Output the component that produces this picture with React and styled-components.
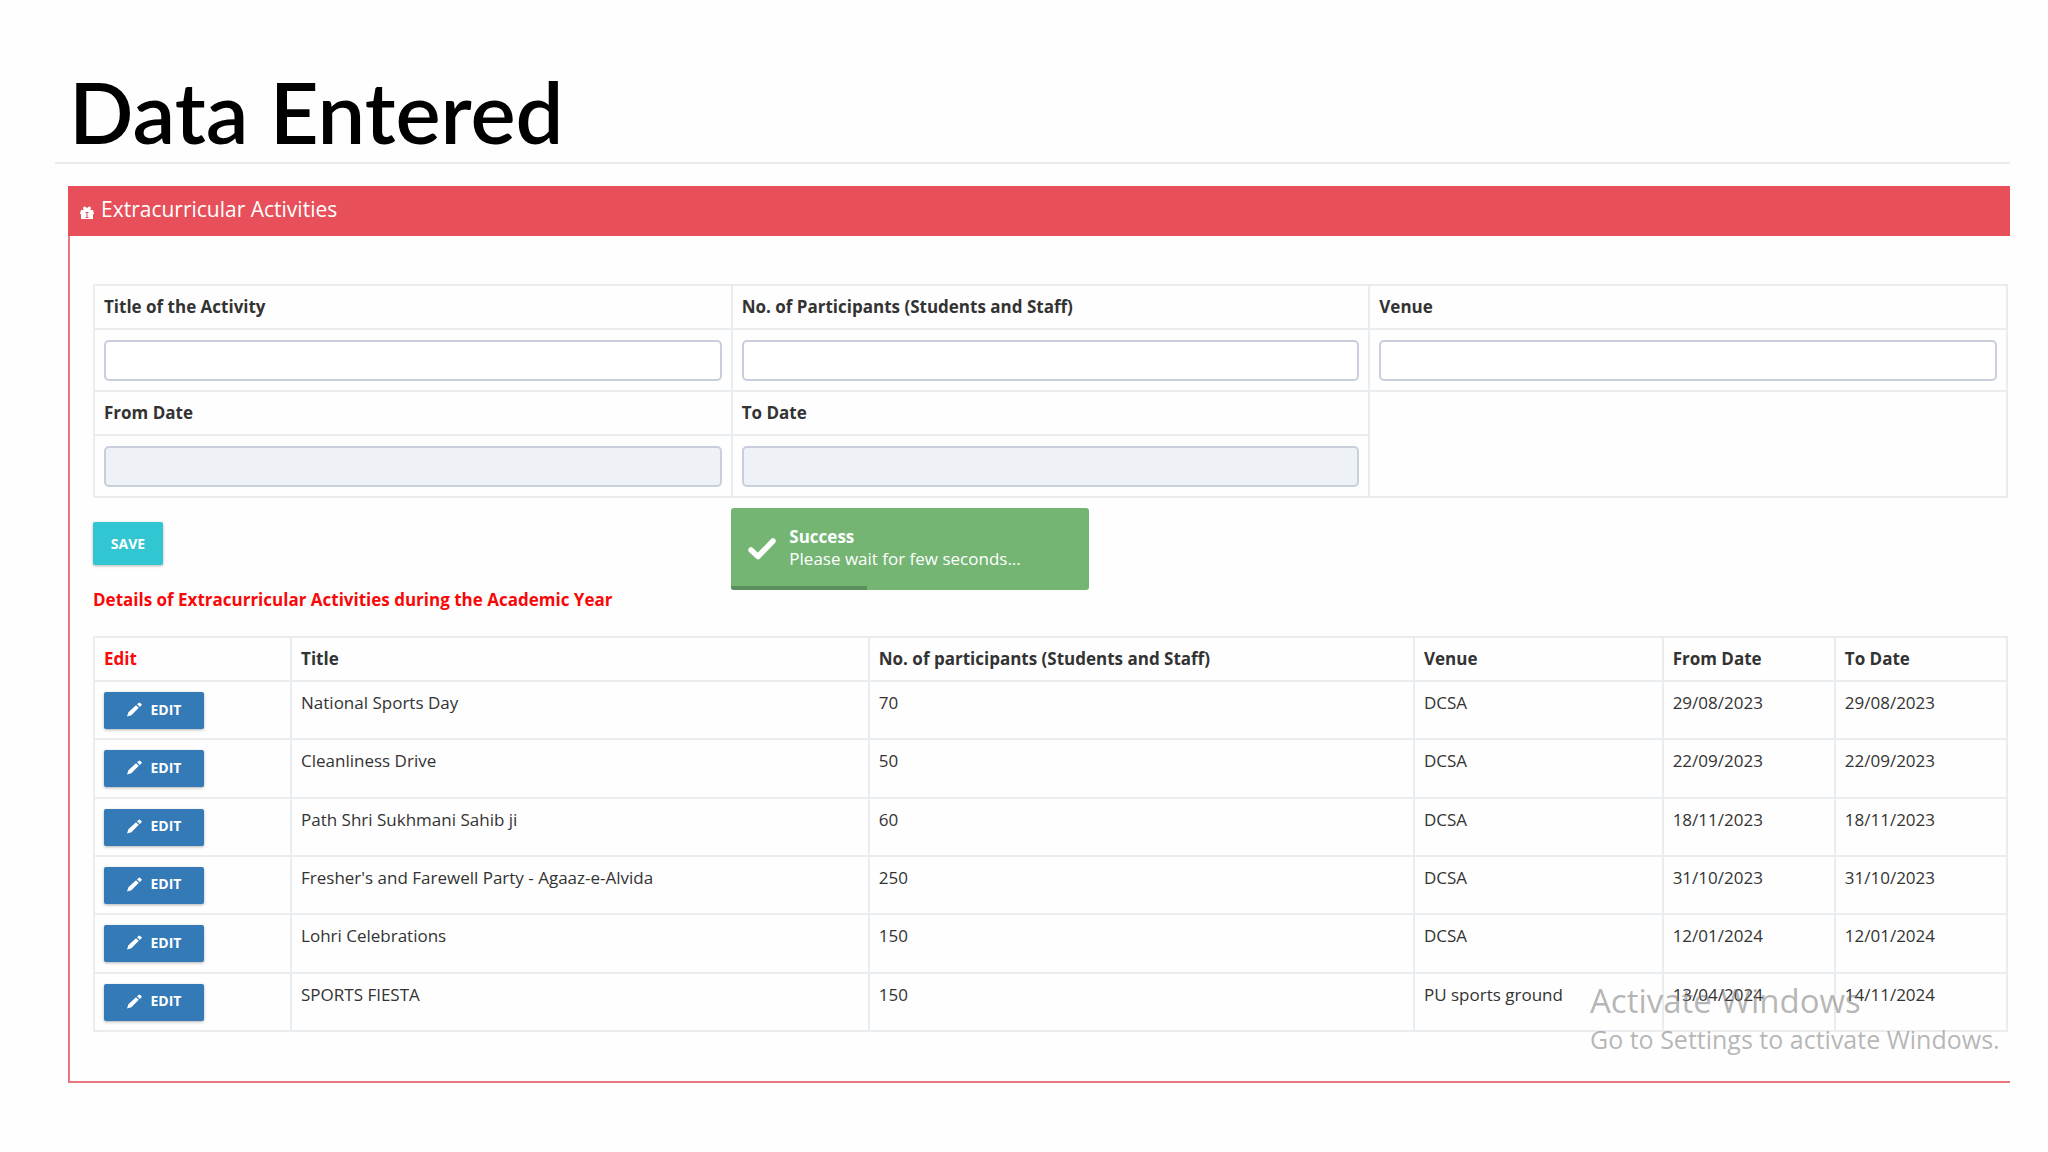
import React from "react";
import styled, { createGlobalStyle } from "styled-components";

const GlobalStyle = createGlobalStyle`
  *, *::before, *::after { box-sizing: border-box; }
  body {
    margin: 0;
    background: #fefefe;
    color: #333;
    font-family: "Open Sans", "Noto Sans", sans-serif;
    font-size: 17px;
    line-height: 24px;
  }
`;

const Page = styled.div`
  position: relative;
  display: flex;
  flex-direction: column;
  min-height: 100vh;
  padding: 60px 38px 70px 55px;
`;

const PageTitle = styled.h1`
  margin: 0;
  padding: 0 14px;
  font-family: Lato, "Open Sans", sans-serif;
  font-size: 85px;
  font-weight: 600;
  line-height: 102px;
  color: #000;
  border-bottom: 2px solid #e9ebec;
`;

const Panel = styled.section`
  margin: 22px 0 0 13px;
  border: 2px solid #e87780;
  border-top: 0;
  border-right: 0;
`;

const PanelHeader = styled.header`
  display: flex;
  align-items: center;
  gap: 7px;
  height: 50px;
  margin-left: -2px;
  padding: 0 12px;
  background: #e7505a;
  color: #fff;
`;

const PanelTitle = styled.h2`
  margin: 0;
  padding-bottom: 4px;
  font-size: 21px;
  font-weight: 400;
  line-height: 28px;
`;

const PanelBody = styled.div`
  padding: 48px 2px 49px 23px;
`;

const Table = styled.table`
  width: 100%;
  table-layout: fixed;
  border-collapse: collapse;
`;

const RecordsTable = styled(Table)`
  height: 396px;
`;

const Cell = styled.td`
  padding: 9px 9px;
  border: 2px solid #e9edef;
  vertical-align: top;
`;

const HeadCell = styled(Cell).attrs({ as: "th" })`
  font-weight: 700;
  text-align: left;
  color: ${(p) => (p.$alert ? "#f80808" : "#333")};
`;

const FieldLabel = styled.label`
  display: block;
  font-weight: 700;
`;

const TextInput = styled.input`
  display: block;
  width: 100%;
  height: 41px;
  margin: 1px 0 0;
  padding: 6px 12px;
  border: 2px solid #c8cedb;
  border-radius: 5px;
  background: ${(p) => (p.readOnly ? "#eef1f6" : "#fff")};
  font: inherit;
  color: inherit;
`;

const Button = styled.button`
  display: inline-flex;
  align-items: center;
  justify-content: center;
  gap: 9px;
  height: ${(p) => (p.$small ? "37px" : "43px")};
  width: ${(p) => (p.$small ? "100px" : "70px")};
  padding: ${(p) => (p.$small ? "0 0 2px" : "0")};
  border: 0;
  border-radius: 2px;
  background: ${(p) => (p.$small ? "#337ab7" : "#32c5d2")};
  box-shadow: 0 1px 3px rgba(0, 0, 0, 0.3);
  color: #fff;
  font: 700 14px/20px "Open Sans", "Noto Sans", sans-serif;
  text-transform: uppercase;
`;

const EditCell = styled(Cell)`
  padding: 10px 9px 8px;
  line-height: 0;
`;

const Actions = styled.div`
  position: relative;
  padding-top: 24px;
  line-height: 0;
`;

const Toast = styled.div`
  position: absolute;
  top: 10px;
  left: calc(100% / 3);
  display: flex;
  align-items: center;
  gap: 13px;
  width: 358px;
  height: 82px;
  padding: 0 17px;
  border-radius: 3px;
  overflow: hidden;
  background: #74b574;
  color: #fff;
`;

const ToastText = styled.div`
  padding-bottom: 2px;
  line-height: 22px;
`;

const ToastProgress = styled.div`
  position: absolute;
  left: 0;
  bottom: 0;
  width: 38%;
  height: 4px;
  background: #5b8f5e;
`;

const SectionTitle = styled.h3`
  margin: 23px 0 24px;
  font-size: 17px;
  font-weight: 700;
  line-height: 24px;
  color: #f80808;
`;

const Watermark = styled.div`
  position: absolute;
  right: 56px;
  bottom: 97px;
  width: 402px;
  color: rgba(110, 110, 110, 0.5);
  font-size: 25px;
  line-height: 34px;
  white-space: nowrap;
  pointer-events: none;
`;

const WatermarkTitle = styled.div`
  font-size: 33px;
  line-height: 42px;
`;

const GiftIcon = () => (
  <svg width="14" height="18" viewBox="0 -4 14 18" fill="#fff" aria-hidden="true">
    <path d="M1 4h3.200C2.500 3.400 2.800.5 4.600.5 5.800.5 6.500 1.600 7 2.600 7.500 1.600 8.200.5 9.400.5c1.800 0 2.100 2.900.4 3.500H13l1 3.500-1 1V13H1V8.500L0 7.500z" />
    <path d="M5.500 6h3v1h-1v4h1v1h-3v-1h1V7h-1z" fill="#e7505a" />
  </svg>
);

const PencilIcon = () => (
  <svg width="15" height="15" viewBox="0 0 15 15" fill="#fff" aria-hidden="true">
    <path d="M0 14.500l1.400-4.200L9 3.200 11.800 5.800 4.400 13.200zM10 2.300L11.600.9q.8-.7 1.500 0l1.300 1.200q.7.700 0 1.400L12.800 5z" />
  </svg>
);

const CheckIcon = () => (
  <svg width="28" height="22" viewBox="0 0 28 22" fill="none" aria-hidden="true">
    <path d="M3 12l7 6.500L25 3" stroke="#fff" strokeWidth="5.500" strokeLinecap="round" strokeLinejoin="round" />
  </svg>
);

const records = [
  ["National Sports Day", "70", "DCSA", "29/08/2023", "29/08/2023"],
  ["Cleanliness Drive", "50", "DCSA", "22/09/2023", "22/09/2023"],
  ["Path Shri Sukhmani Sahib ji", "60", "DCSA", "18/11/2023", "18/11/2023"],
  ["Fresher's and Farewell Party - Agaaz-e-Alvida", "250", "DCSA", "31/10/2023", "31/10/2023"],
  ["Lohri Celebrations", "150", "DCSA", "12/01/2024", "12/01/2024"],
  ["SPORTS FIESTA", "150", "PU sports ground", "13/04/2024", "14/11/2024"],
];

const columns = [
  { title: "Edit", width: "10.3%", alert: true },
  { title: "Title", width: "30.2%" },
  { title: "No. of participants (Students and Staff)", width: "28.5%" },
  { title: "Venue", width: "13%" },
  { title: "From Date", width: "9%" },
  { title: "To Date", width: "9%" },
];

export default function App() {
  return (
    <Page>
      <GlobalStyle />
      <PageTitle>Data Entered</PageTitle>
      <Panel>
        <PanelHeader>
          <GiftIcon />
          <PanelTitle>Extracurricular Activities</PanelTitle>
        </PanelHeader>
        <PanelBody>
          <Table>
            <tbody>
              <tr>
                <Cell><FieldLabel htmlFor="title">Title of the Activity</FieldLabel></Cell>
                <Cell><FieldLabel htmlFor="participants">No. of Participants (Students and Staff)</FieldLabel></Cell>
                <Cell><FieldLabel htmlFor="venue">Venue</FieldLabel></Cell>
              </tr>
              <tr>
                <Cell><TextInput id="title" type="text" /></Cell>
                <Cell><TextInput id="participants" type="text" /></Cell>
                <Cell><TextInput id="venue" type="text" /></Cell>
              </tr>
              <tr>
                <Cell><FieldLabel htmlFor="from">From Date</FieldLabel></Cell>
                <Cell><FieldLabel htmlFor="to">To Date</FieldLabel></Cell>
                <Cell rowSpan={2} />
              </tr>
              <tr>
                <Cell><TextInput id="from" type="text" readOnly /></Cell>
                <Cell><TextInput id="to" type="text" readOnly /></Cell>
              </tr>
            </tbody>
          </Table>
          <Actions>
            <Button type="button">Save</Button>
            <Toast role="status">
              <CheckIcon />
              <ToastText>
                <strong>Success</strong>
                <div>Please wait for few seconds...</div>
              </ToastText>
              <ToastProgress />
            </Toast>
          </Actions>
          <SectionTitle>Details of Extracurricular Activities during the Academic Year</SectionTitle>
          <RecordsTable>
            <colgroup>
              {columns.map((c) => (
                <col key={c.title} width={c.width} />
              ))}
            </colgroup>
            <thead>
              <tr>
                {columns.map((c) => (
                  <HeadCell key={c.title} scope="col" $alert={c.alert}>{c.title}</HeadCell>
                ))}
              </tr>
            </thead>
            <tbody>
              {records.map((row) => (
                <tr key={row[0]}>
                  <EditCell>
                    <Button type="button" $small><PencilIcon />Edit</Button>
                  </EditCell>
                  {row.map((value, i) => (
                    <Cell key={i}>{value}</Cell>
                  ))}
                </tr>
              ))}
            </tbody>
          </RecordsTable>
        </PanelBody>
      </Panel>
      <Watermark>
        <WatermarkTitle>Activate Windows</WatermarkTitle>
        Go to Settings to activate Windows.
      </Watermark>
    </Page>
  );
}
